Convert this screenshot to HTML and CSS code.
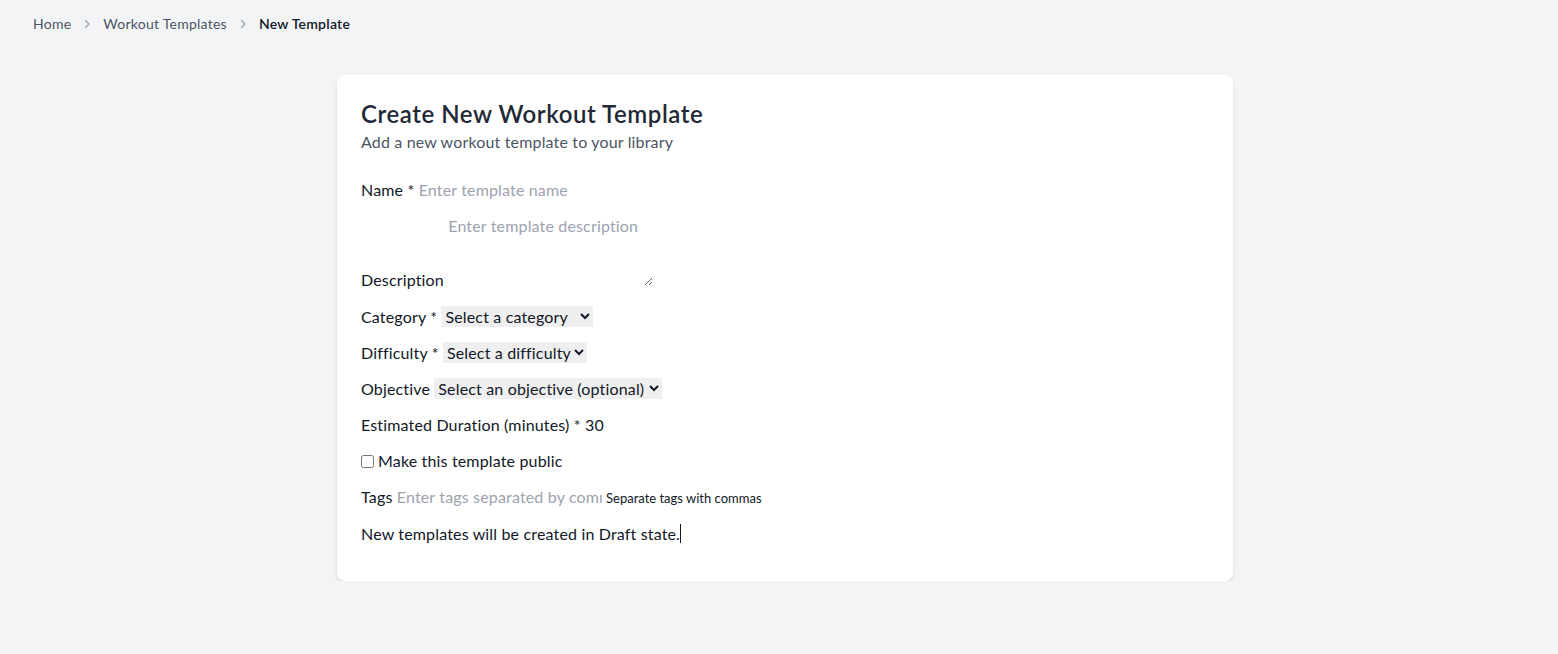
FILE: index.html
```html
<!DOCTYPE html>
<html lang="en">
<head>
<meta charset="utf-8">
<title>New Template</title>
<link rel="stylesheet" href="styles.css">
</head>
<body>
<nav class="crumbs">
  <a class="crumb" href="#">Home</a>
  <svg class="chev" viewBox="0 0 16 16" width="16" height="16"><path d="M6.5 4.5 10 8l-3.5 3.5" fill="none" stroke="currentColor" stroke-width="1.4" stroke-linecap="round" stroke-linejoin="round"/></svg>
  <a class="crumb" href="#">Workout Templates</a>
  <svg class="chev" viewBox="0 0 16 16" width="16" height="16"><path d="M6.5 4.5 10 8l-3.5 3.5" fill="none" stroke="currentColor" stroke-width="1.4" stroke-linecap="round" stroke-linejoin="round"/></svg>
  <span class="crumb current">New Template</span>
</nav>
<main class="main">
  <section class="card">
    <h1 class="title">Create New Workout Template</h1>
    <p class="subtitle">Add a new workout template to your library</p>
    <form class="form">
      <div class="field"><label for="name">Name *</label> <input id="name" type="text" placeholder="Enter template name"></div>
      <div class="field field-desc"><label for="desc">Description</label> <textarea id="desc" rows="3" placeholder="Enter template description"></textarea></div>
      <div class="field"><label for="cat">Category *</label> <select id="cat" class="sel-cat"><option>Select a category</option></select></div>
      <div class="field"><label for="diff">Difficulty *</label> <select id="diff" class="sel-diff"><option>Select a difficulty</option></select></div>
      <div class="field"><label for="obj">Objective</label> <select id="obj" class="sel-obj"><option>Select an objective (optional)</option></select></div>
      <div class="field"><label for="dur">Estimated Duration (minutes) *</label> <input id="dur" type="number" value="30"></div>
      <div class="field"><input id="pub" type="checkbox"><label for="pub">Make this template public</label></div>
      <div class="field"><label for="tags">Tags</label> <input id="tags" type="text" placeholder="Enter tags separated by commas"> <span class="hint">Separate tags with commas</span></div>
      <div class="field"><span class="note">New templates will be created in Draft state.</span></div>
    </form>
  </section>
</main>
</body>
</html>
```
FILE: styles.css
```css
* { box-sizing: border-box; }
html, body { margin: 0; padding: 0; }
body {
  background: #f3f4f6;
  font-family: Lato, "Noto Sans", sans-serif;
  color: #111827;
  font-size: 16px;
  line-height: 24px;
  letter-spacing: 0.16px;
}
a { color: inherit; text-decoration: none; }
button, input, select, textarea {
  font-family: inherit;
  font-size: 100%;
  line-height: inherit;
  letter-spacing: inherit;
  color: inherit;
  margin: 0;
  padding: 0;
  border: 0 solid #e5e7eb;
}
input::placeholder, textarea::placeholder { color: #9ca3af; opacity: 1; }

.crumbs {
  display: flex;
  align-items: center;
  padding: 14px 33px 0;
  font-size: 14px;
  line-height: 20px;
  letter-spacing: 0.25px;
}
.crumb { color: #4b5563; }
.crumb.current { color: #111827; font-weight: 600; }
.chev { color: #9ca3af; margin: 0 8px; }

.main {
  padding: 41px 0 0 12px;
  display: flex;
  justify-content: center;
}
.card {
  width: 896px;
  background: #fff;
  border-radius: 8px;
  box-shadow: 0 4px 6px -1px rgba(0,0,0,0.1), 0 2px 4px -2px rgba(0,0,0,0.1);
  padding: 24px 24px 35px;
}
.title {
  margin: 0;
  font-size: 24px;
  line-height: 30px;
  font-weight: 600;
  color: #1f2937;
  letter-spacing: 0.55px;
}
.subtitle {
  margin: 1px 0 0;
  color: #4b5563;
  line-height: 24px;
}
.form {
  margin-top: 24px;
  display: flex;
  flex-direction: column;
  gap: 12px;
}
.field { line-height: 24px; }
.field-desc { margin-bottom: 1px; }
input[type=text] { width: 205px; }
textarea { resize: vertical; width: 205px; }
.sel-cat { width: 152px; }
.sel-diff { width: 144px; }
.sel-obj { width: 228px; }
.hint { font-size: 13px; letter-spacing: 0; }
.note { border-right: 1px solid #111827; }
input[type=checkbox] { margin: 0 4px 0 0; vertical-align: -1px; width: 13px; height: 13px; }
```
